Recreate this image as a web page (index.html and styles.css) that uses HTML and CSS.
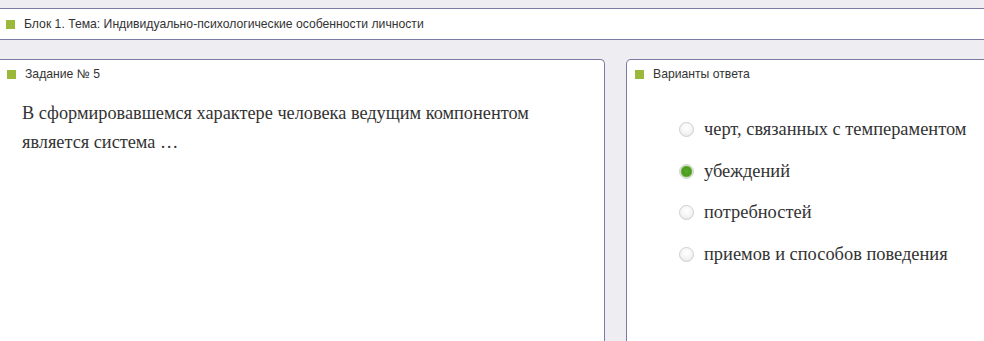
FILE: index.html
```html
<!DOCTYPE html>
<html lang="ru">
<head>
<meta charset="utf-8">
<link rel="stylesheet" href="styles.css">
</head>
<body>
<div class="topbar">
  <span class="mark"></span>
  <span class="caption">Блок 1. Тема: Индивидуально-психологические особенности личности</span>
</div>
<div class="panels">
  <section class="panel panel-left">
    <div class="panel-head"><span class="mark"></span><span class="caption">Задание № 5</span></div>
    <p class="question">В сформировавшемся характере человека ведущим компонентом является система …</p>
  </section>
  <section class="panel panel-right">
    <div class="panel-head"><span class="mark"></span><span class="caption">Варианты ответа</span></div>
    <ul class="answers">
      <li class="answer"><span class="radio"></span><span>черт, связанных с темпераментом</span></li>
      <li class="answer"><span class="radio radio-on"></span><span>убеждений</span></li>
      <li class="answer"><span class="radio"></span><span>потребностей</span></li>
      <li class="answer"><span class="radio"></span><span>приемов и способов поведения</span></li>
    </ul>
  </section>
</div>
</body>
</html>
```
FILE: styles.css
```css
html, body {
  margin: 0;
  padding: 0;
}
body {
  background: #eeeef2;
  font-family: "Liberation Sans", Arial, sans-serif;
  color: #333;
  overflow: hidden;
  height: 341px;
}
.topbar {
  margin-top: 8px;
  height: 30px;
  background: #fff;
  border-top: 1px solid #7a7aa2;
  border-bottom: 1px solid #7a7aa2;
  display: flex;
  align-items: center;
  padding-left: 6px;
}
.mark {
  width: 9px;
  height: 9px;
  background: #9bb83b;
  flex: none;
}
.caption {
  font-size: 12.2px;
  margin-left: 9px;
  color: #333;
}
.panels {
  margin-top: 19px;
  display: flex;
  gap: 21px;
  margin-left: -1px;
}
.panel {
  background: #fff;
  border: 1px solid #7a7aa2;
  border-bottom: none;
  height: 282px;
  box-sizing: border-box;
}
.panel-left {
  width: 606px;
  border-top-right-radius: 5px;
  flex: none;
}
.panel-right {
  flex: 1 0 auto;
  border-top-left-radius: 5px;
  margin-right: -20px;
}
.panel-head {
  display: flex;
  align-items: center;
  height: 26px;
  padding-left: 7px;
  padding-top: 1px;
}
.panel-right .panel-head {
  padding-left: 8px;
}
.question {
  margin: 12px 0 0 22px;
  width: 560px;
  font-family: "Liberation Serif", "Times New Roman", serif;
  font-size: 18.3px;
  line-height: 29px;
  color: #333;
}
.answers {
  list-style: none;
  margin: 22px 0 0 52px;
  padding: 0;
}
.answer {
  display: flex;
  align-items: center;
  height: 41.5px;
  font-family: "Liberation Serif", "Times New Roman", serif;
  font-size: 18.4px;
  color: #333;
}
.radio {
  width: 15px;
  height: 15px;
  border-radius: 50%;
  border: 1px solid #cfcfcf;
  background: radial-gradient(circle at 50% 35%, #ffffff 0%, #f4f4f4 55%, #e0e0e0 100%);
  margin-right: 10px;
  flex: none;
  box-sizing: border-box;
}
.radio-on {
  border-color: #cfcfcf;
  background: radial-gradient(circle at 50% 50%, #58a82a 0%, #4b9c1f 50%, #86c060 60%, #eeeeee 68%, #f6f6f6 100%);
}
```
